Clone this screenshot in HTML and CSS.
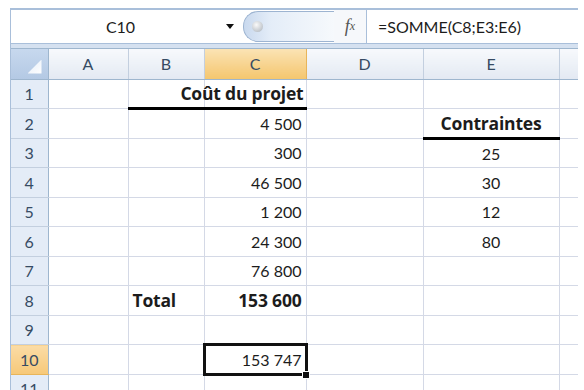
FILE: index.html
```html
<!DOCTYPE html>
<html lang="fr">
<head>
  <meta charset="UTF-8">
  <title>Coût du projet</title>
  <link rel="stylesheet" href="styles.css">
</head>
<body>
  <div class="sheet">
    <div class="formula-bar">
      <div class="name-box">
        <span class="name-text">C10</span>
        <span class="name-arrow"></span>
      </div>
      <div class="splitter">
        <span class="splitter-dot"></span>
      </div>
      <div class="fx-btn"><i>f</i><sub>x</sub></div>
      <div class="formula-input">=SOMME(C8;E3:E6)</div>
    </div>
    <div class="band"></div>

    <table class="grid">
      <colgroup>
        <col class="w-head">
        <col class="w-a">
        <col class="w-b">
        <col class="w-c">
        <col class="w-d">
        <col class="w-e">
        <col>
      </colgroup>
      <tr class="col-heads">
        <th class="corner"><span class="corner-tri"></span></th>
        <th>A</th><th>B</th><th class="sel">C</th><th>D</th><th>E</th><th></th>
      </tr>
      <tr>
        <th class="row-head">1</th>
        <td></td><td class="underline"></td>
        <td class="num bold underline"><div class="spill">Coût du projet</div></td>
        <td></td><td></td><td></td>
      </tr>
      <tr>
        <th class="row-head">2</th>
        <td></td><td></td><td class="num">4 500</td><td></td><td class="center bold underline">Contraintes</td><td></td>
      </tr>
      <tr>
        <th class="row-head">3</th>
        <td></td><td></td><td class="num">300</td><td></td><td class="center">25</td><td></td>
      </tr>
      <tr>
        <th class="row-head">4</th>
        <td></td><td></td><td class="num">46 500</td><td></td><td class="center">30</td><td></td>
      </tr>
      <tr>
        <th class="row-head">5</th>
        <td></td><td></td><td class="num">1 200</td><td></td><td class="center">12</td><td></td>
      </tr>
      <tr>
        <th class="row-head">6</th>
        <td></td><td></td><td class="num">24 300</td><td></td><td class="center">80</td><td></td>
      </tr>
      <tr>
        <th class="row-head">7</th>
        <td></td><td></td><td class="num">76 800</td><td></td><td></td><td></td>
      </tr>
      <tr>
        <th class="row-head">8</th>
        <td></td><td class="bold">Total</td><td class="num bold">153 600</td><td></td><td></td><td></td>
      </tr>
      <tr>
        <th class="row-head">9</th>
        <td></td><td></td><td></td><td></td><td></td><td></td>
      </tr>
      <tr>
        <th class="row-head sel">10</th>
        <td></td><td></td><td class="num active">153 747</td><td></td><td></td><td></td>
      </tr>
      <tr>
        <th class="row-head">11</th>
        <td></td><td></td><td></td><td></td><td></td><td></td>
      </tr>
    </table>
  </div>
</body>
</html>
```

FILE: styles.css
```css
body {
  margin: 0;
  background-color: #fff;
  font-family: Lato, "Liberation Sans", sans-serif;
  font-size: 16px;
  color: #1c1c1c;
  overflow: hidden;
}
.sheet {
  margin: 8px 6px 0 10px;
  border-left: 1px solid #a9bfda;
  height: 382px;
  overflow: hidden;
}

/* formula bar */
.formula-bar {
  display: flex;
  height: 33px;
  border-top: 2px solid #a9bfda;
  background-color: #fff;
}
.name-box {
  width: 225px;
  display: flex;
  align-items: center;
}
.name-text {
  flex: 1;
  text-align: center;
  padding-left: 4px;
}
.name-arrow {
  width: 0;
  height: 0;
  border-left: 4px solid transparent;
  border-right: 4px solid transparent;
  border-top: 5px solid #111;
  margin-right: 2px;
}
.splitter {
  width: 90px;
  margin: 1px 0 1px 7px;
  border: 1px solid #9db4d1;
  border-right: none;
  border-radius: 15px 0 0 15px;
  background: linear-gradient(90deg, #c9d9ee 0%, #e4edf8 30%, #f6f9fc 100%);
  display: flex;
  align-items: center;
}
.splitter-dot {
  width: 11px;
  height: 11px;
  border-radius: 50%;
  margin-left: 8px;
  background: radial-gradient(circle at 40% 35%, #fafafa, #a9b0b8);
}
.fx-btn {
  width: 32px;
  display: flex;
  align-items: center;
  justify-content: center;
  font-family: "Liberation Serif", serif;
  color: #555;
  font-size: 18px;
  border-right: 1px solid #a9bfda;
  background-color: #f6f8fb;
}
.fx-btn sub {
  font-size: 12px;
  font-style: italic;
  vertical-align: -1px;
}
.formula-input {
  flex: 1;
  padding-left: 11px;
  display: flex;
  align-items: center;
}
.band {
  height: 4px;
  border-top: 1px solid #a9bfda;
  border-bottom: 1px solid #9eb6ce;
  background-color: #d5e1f0;
}

/* grid */
.grid {
  border-collapse: collapse;
  table-layout: fixed;
  width: 580px;
}
.w-head { width: 37px; }
.w-a { width: 80px; }
.w-b { width: 76px; }
.w-c { width: 102px; }
.w-d { width: 117px; }
.w-e { width: 136px; }

.grid tr { height: 29.5px; }
.grid tr.col-heads { height: 30px; }

.grid td {
  border-right: 1px solid #d4d9e6;
  border-bottom: 1px solid #d4d9e6;
  padding: 0 4px;
  white-space: nowrap;
  overflow: visible;
}
.grid th {
  font-weight: normal;
  color: #364b63;
  padding: 0;
}
.col-heads th {
  border-right: 1px solid #c3cfdf;
  border-bottom: 1px solid #9eb6ce;
  background: linear-gradient(#f7f9fc, #e3e9f2);
}
.col-heads th.sel {
  background: linear-gradient(#fbe3b4, #f4c66e);
  border-right-color: #e8b55a;
}
.col-heads th.corner {
  position: relative;
  background: linear-gradient(#c7d8ee, #b4c9e4);
  border-right-color: #9eb6ce;
}
.corner-tri {
  position: absolute;
  right: 6px;
  bottom: 5px;
  width: 14px;
  height: 14px;
  background: linear-gradient(135deg, #e6eef8, #fff);
  clip-path: polygon(100% 0, 100% 100%, 0 100%);
}
.row-head {
  background-color: #e4ecf7;
  border-right: 1px solid #9eb6ce;
  border-bottom: 1px solid #c3cfdf;
  text-align: center;
}
.row-head.sel {
  background: linear-gradient(#fbdca6, #f6c878);
  border-bottom-color: #e8b55a;
}

.num { text-align: right; padding-right: 3px; }
.center { text-align: center; }
.bold {
  font-family: "Open Sans", Lato, sans-serif;
  font-weight: bold;
  font-size: 17.5px;
  letter-spacing: -0.2px;
}
.spill {
  display: flex;
  justify-content: flex-end;
}
.grid td.underline { border-bottom: 3px solid #000; }
.grid td.num.underline { padding-right: 2px; }

.grid td.active {
  position: relative;
  padding-right: 4px;
}
.grid td.active::after {
  content: '';
  position: absolute;
  left: -2px;
  top: -2px;
  right: -2px;
  bottom: -2px;
  border: 3px solid #111;
}
.grid td.active::before {
  content: '';
  position: absolute;
  right: -4px;
  bottom: -5px;
  width: 6px;
  height: 6px;
  background-color: #111;
  border: 1px solid #fff;
  z-index: 1;
}
```
